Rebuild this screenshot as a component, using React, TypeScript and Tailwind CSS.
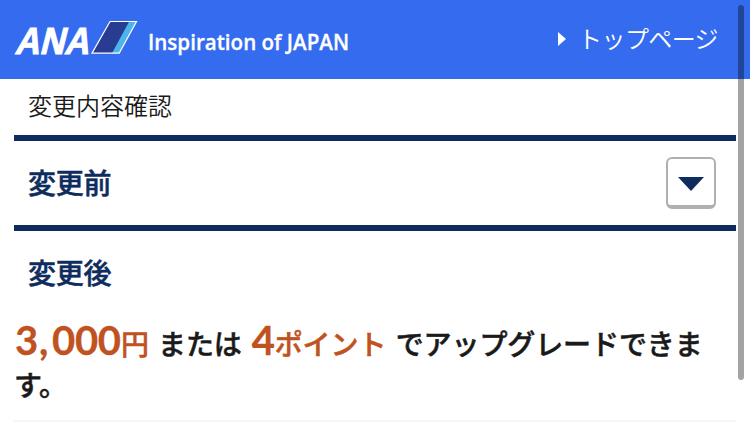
function Logo() {
    return (
        <svg width="126" height="44" viewBox="12 18 126 44" className="shrink-0 overflow-visible">
            <text
                x="0"
                y="0"
                transform="translate(14.2 53.6) skewX(-14)"
                fill="#fff"
                stroke="#fff"
                strokeWidth="1"
                fontFamily="'Liberation Sans', Arial, sans-serif"
                fontWeight="700"
                fontSize="38"
                textLength="74.5"
                lengthAdjust="spacingAndGlyphs"
            >
                ANA
            </text>
            <path d="M110 21.5H136.5L119.2 53.2H92Z" fill="#283c92" />
            <path d="M129.2 21.5H136.5L119.2 53.2H112Z" fill="#4db5ec" />
            <path d="M110 21.5H136.5L119.2 53.2H92Z" fill="none" stroke="#fff" strokeWidth="1.2" />
        </svg>
    )
}

function Header() {
    return (
        <header className="flex h-[79px] bg-[#356cef] text-white">
            <div className="flex w-full items-start pl-[12px] pr-[32px]">
                <div className="pt-[18px]">
                    <Logo />
                </div>
                <svg width="210" height="36" viewBox="0 0 210 36" className="ml-[9px] mt-[28px] overflow-visible">
                    <text x="1" y="22" fill="#fff" stroke="#fff" strokeWidth="0.3" fontFamily="'Open Sans', sans-serif" fontWeight="600" fontSize="21.5" textLength="201" lengthAdjust="spacingAndGlyphs">
                        Inspiration of JAPAN
                    </text>
                </svg>
                <a className="ml-auto flex items-center pt-[22px] text-[24px] font-[350] leading-[36px] tracking-[-0.6px]">
                    <svg width="8" height="14" viewBox="0 0 8 14" className="mr-[12px]">
                        <path d="M0 0L8 7L0 14Z" fill="#fff" />
                    </svg>
                    <span className="-mt-[2px]">トップページ</span>
                </a>
            </div>
        </header>
    )
}

export default function App() {
    return (
        <div className="relative h-[423px] w-[750px] overflow-hidden bg-white font-['Noto_Sans_CJK_JP',sans-serif] text-[#1a1a1a]">
            <Header />
            <main className="ml-[14px] w-[722px]">
                <p className="h-[56px] pl-[14px] text-[24px] font-[350] leading-[52px]">変更内容確認</p>
                <div className="flex h-[90px] items-center justify-between border-t-[6px] border-[#0e2c5e] pl-[14px] pr-[20px]">
                    <h2 className="pb-[3px] text-[28px] font-medium leading-[42px] tracking-[-0.2px] text-[#0e2c5e] [-webkit-text-stroke:0.5px]">変更前</h2>
                    <button className="flex h-[52px] w-[50px] items-center justify-center rounded-[6px] border-2 border-b-4 border-[#b0b0b0] bg-white pt-[3px]">
                        <svg width="26" height="14" viewBox="0 0 26 14">
                            <path d="M0 0H26L13 14Z" fill="#0e2c5e" />
                        </svg>
                    </button>
                </div>
                <div className="h-[90px] border-t-[6px] border-[#0e2c5e] pl-[14px]">
                    <h2 className="text-[28px] font-medium leading-[83px] tracking-[-0.2px] text-[#0e2c5e] [-webkit-text-stroke:0.5px]">変更後</h2>
                </div>
                <div className="h-[107px] border-b-2 border-[#f5f7f6] pt-[5px] text-[28px] font-medium leading-[40px] tracking-[-0.1px] [-webkit-text-stroke:0.5px]">
                    <div className="flex h-[42px] items-baseline whitespace-nowrap">
                        <span className="flex w-[135px] items-baseline text-[#c0521f]">
                            <span className="flex w-[108px] items-baseline font-[Lato,sans-serif] text-[40px] font-bold tracking-[-0.3px] [-webkit-text-stroke:0.3px]">
                                <span className="w-[24px] pl-px">3</span>
                                <span className="w-[14px] pl-px">,</span>
                                <span>000</span>
                            </span>
                            円
                        </span>
                        <span className="ml-[9px]">または</span>
                        <span className="ml-[10px] flex w-[135px] items-baseline text-[#c0521f]">
                            <span className="w-[23px] font-[Lato,sans-serif] text-[40px] font-bold [-webkit-text-stroke:0.3px]">4</span>ポイント
                        </span>
                        <span className="ml-[9px]">でアップグレードできま</span>
                    </div>
                    <div className="leading-[44px]">す。</div>
                </div>
            </main>
            <div className="absolute left-[738px] top-[5px] h-[375px] w-[6px] rounded-full bg-black/36" />
        </div>
    )
}
